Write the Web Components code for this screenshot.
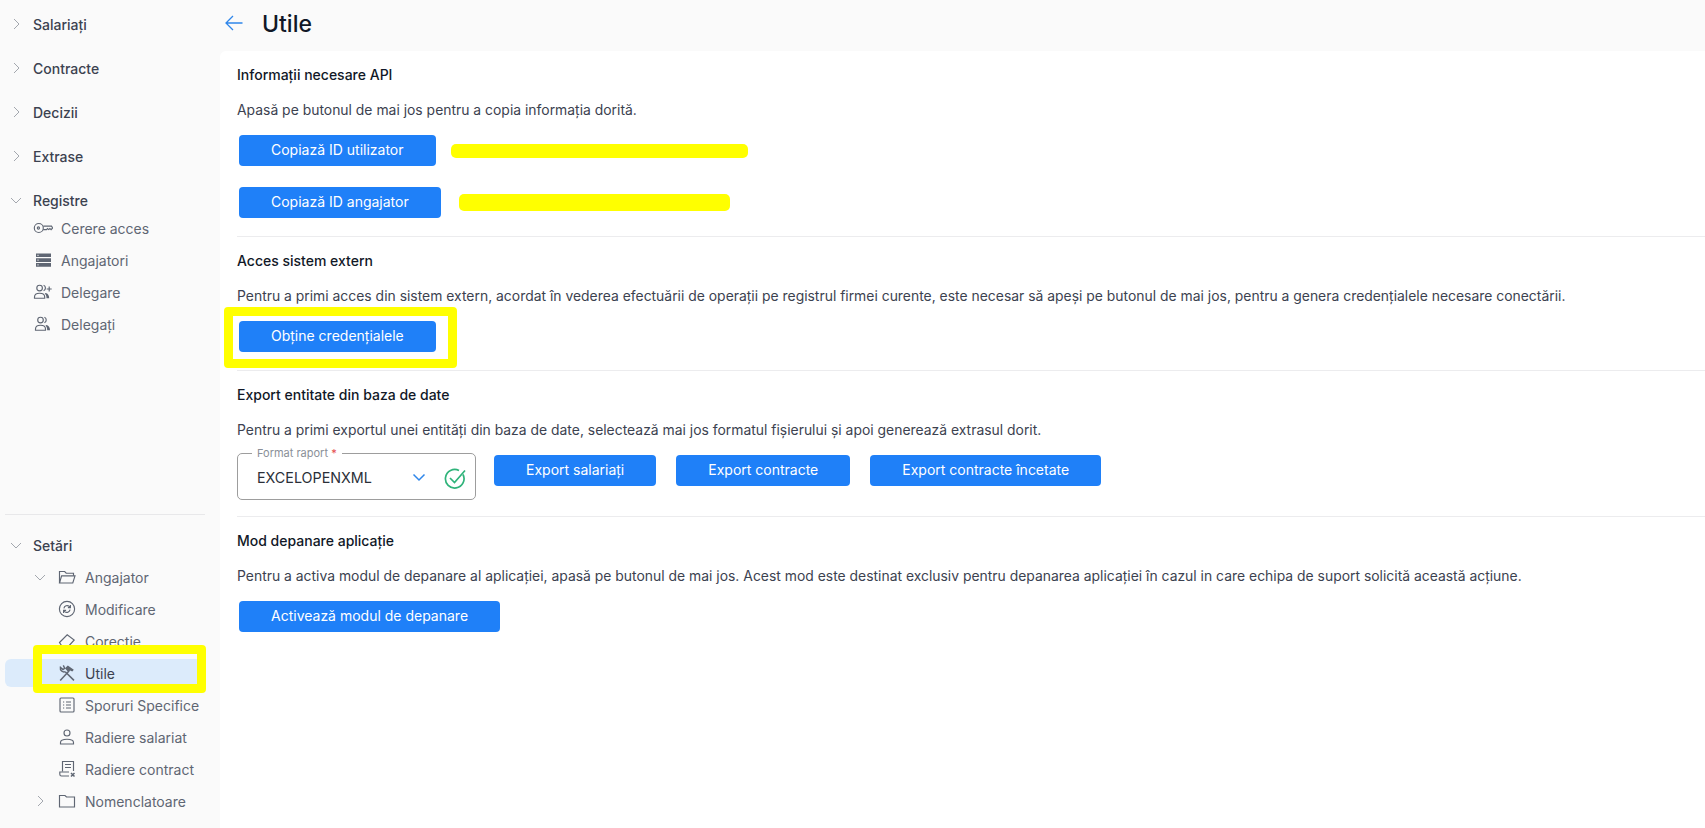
<!DOCTYPE html>
<html lang="ro">
<head>
<meta charset="utf-8">
<title>Utile</title>
<style>
  html, body { margin: 0; height: 100%; }
  body { font: 14px Inter, "Liberation Sans", sans-serif; background: #fafafa; overflow: hidden; }
</style>
</head>
<body>
<app-shell>
  <side-nav slot="nav">
    <nav-item top caret="closed">Salariați</nav-item>
    <nav-item top caret="closed">Contracte</nav-item>
    <nav-item top caret="closed">Decizii</nav-item>
    <nav-item top caret="closed">Extrase</nav-item>
    <nav-item top caret="open" style="height:25px;padding-top:1px">Registre</nav-item>
    <nav-item icon="key">Cerere acces</nav-item>
    <nav-item icon="server">Angajatori</nav-item>
    <nav-item icon="userplus">Delegare</nav-item>
    <nav-item icon="users">Delegați</nav-item>
    <nav-item slot="bottom" top caret="open" class="settings">Setări</nav-item>
    <nav-item slot="bottom" level="1" caret="open" icon="folderopen">Angajator</nav-item>
    <nav-item slot="bottom" level="1" icon="refresh">Modificare</nav-item>
    <nav-item slot="bottom" level="1" icon="eraser">Corecție</nav-item>
    <nav-item slot="bottom" level="1" icon="tools" selected marked>Utile</nav-item>
    <nav-item slot="bottom" level="1" icon="list">Sporuri Specifice</nav-item>
    <nav-item slot="bottom" level="1" icon="user">Radiere salariat</nav-item>
    <nav-item slot="bottom" level="1" icon="contract">Radiere contract</nav-item>
    <nav-item slot="bottom" level="1" caret="closed" icon="folder">Nomenclatoare</nav-item>
  </side-nav>

  <page-header slot="header">Utile</page-header>

  <page-section>
    <span slot="title">Informații necesare API</span>
    <span slot="text">Apasă pe butonul de mai jos pentru a copia informația dorită.</span>
    <action-row gap="15" style="margin-bottom:21px">
      <ui-button>Copiază ID utilizator</ui-button>
      <redact-bar width="297" height="14"></redact-bar>
    </action-row>
    <action-row gap="18">
      <ui-button>Copiază ID angajator</ui-button>
      <redact-bar width="271" height="17"></redact-bar>
    </action-row>
  </page-section>

  <page-section>
    <span slot="title">Acces sistem extern</span>
    <span slot="text">Pentru a primi acces din sistem extern, acordat în vederea efectuării de operații pe registrul firmei curente, este necesar să apeși pe butonul de mai jos, pentru a genera credențialele necesare conectării.</span>
    <action-row>
      <ui-button marked>Obține credențialele</ui-button>
    </action-row>
  </page-section>

  <page-section class="export">
    <span slot="title">Export entitate din baza de date</span>
    <span slot="text">Pentru a primi exportul unei entități din baza de date, selectează mai jos formatul fișierului și apoi generează extrasul dorit.</span>
    <action-row gap="20" class="flush">
      <report-select label="Format raport" value="EXCELOPENXML"></report-select>
      <ui-button>Export salariați</ui-button>
      <ui-button>Export contracte</ui-button>
      <ui-button>Export contracte încetate</ui-button>
    </action-row>
  </page-section>

  <page-section last>
    <span slot="title">Mod depanare aplicație</span>
    <span slot="text">Pentru a activa modul de depanare al aplicației, apasă pe butonul de mai jos. Acest mod este destinat exclusiv pentru depanarea aplicației în cazul in care echipa de suport solicită această acțiune.</span>
    <action-row>
      <ui-button>Activează modul de depanare</ui-button>
    </action-row>
  </page-section>
</app-shell>

<script>
  // icons, all on a 20x20 grid
  const ICONS = {
    key: '<circle cx="5.800" cy="10" r="4.500"/><circle cx="5.400" cy="10" r="1.100"/><path d="M10.200 8.100h8.300l1.200 1.900-1.600 1.600-1.200-1-1.200 1-1.200-1-1 1h-3.300"/>',
    server: '<g fill="currentColor" stroke="none"><path d="M3 3.500h15v3.600H3zM3 8.300h15v3.600H3zM3 13.100h15v3.600H3z"/></g><path d="M4.500 5.300h1M4.500 10.100h1M4.500 14.900h1" stroke="#fafafa"/>',
    userplus: '<circle cx="6.600" cy="6" r="2.800"/><path d="M1.500 16.200v-1.100c0-2.400 2.100-3.900 5.100-3.900s5.100 1.500 5.100 3.900v1.100z"/><path d="M10.600 3.300a2.900 2.900 0 0 1 0 5.400"/><path d="M12.500 11c2.400.5 3.700 2.300 3.700 5.200h-2.700c0-2-.5-3.500-1.700-4.400z" fill="currentColor" stroke="none"/><path d="M16.200 4.500v5M13.700 7h5"/>',
    users: '<circle cx="7.500" cy="6" r="2.800"/><path d="M2.500 16.200v-1.100c0-2.400 2.100-3.900 5-3.900s5 1.500 5 3.900v1.100z"/><path d="M11.400 3.300a2.900 2.900 0 0 1 0 5.400"/><path d="M13.200 11c2.500.5 3.800 2.300 3.800 5.200h-2.800c0-2-.5-3.500-1.700-4.400z" fill="currentColor" stroke="none"/>',
    folderopen: '<path d="M2.500 16V4.500h5.200l1.500 1.700h7.300v2.600"/><path d="M2.500 16h13.300l2.200-7.200H4.600z"/>',
    folder: '<path d="M2.500 16V4.500h5.500l1.500 1.500h8v10z"/>',
    refresh: '<circle cx="10" cy="10" r="7.600"/><path d="M6.900 9.300a3.300 3.300 0 0 1 5.400-1.900l.9 1M13.100 10.700a3.300 3.300 0 0 1-5.400 1.900l-.9-1"/><path d="M13.400 6v2.600h-2.500M6.600 14v-2.600h2.500"/>',
    eraser: '<path d="M2.500 11.500 10.200 3.800l7 5.200-7.200 8H6.200z"/>',
    tools: '<path d="M3.200 17.400 12 8.100" stroke-width="1.500"/><path d="M8 5.200 10.800 2.600l6 4.100-1.500 1.700-2.200-1-1.700 1.800z" fill="currentColor" stroke="none"/><path d="M17 17.400 8.200 8.700" stroke-width="1.500"/><path d="M8.200 8.700C5.600 9.600 2.800 7.500 3.400 4.400l2.600 2.100 1.700-1.300-1.400-2.800" stroke-width="1.400"/>',
    list: '<rect x="3" y="3" width="14" height="14" rx="1"/><path d="M6 7h1.200M9 7h5M6 10h1.200M9 10h5M6 13h1.200M9 13h5"/>',
    user: '<circle cx="10" cy="6" r="3"/><path d="M3.500 17v-1.600c0-2 2.200-3.200 6.500-3.200s6.500 1.200 6.500 3.200V17z"/>',
    contract: '<path d="M5.500 12.500V2.500h11v9.500M8 5.500h6M8 8.500h6"/><path d="M12 13H2.800v2.200c0 1 .7 1.800 1.700 1.800H12"/><path d="M14 14l3.500 3.500M17.500 14 14 17.500" stroke-width="1.500"/>'
  };

  class AppShell extends HTMLElement {
    constructor() {
      super();
      this.attachShadow({ mode: "open" }).innerHTML = `
        <style>
          :host { display: grid; grid-template-columns: 220px 1fr; height: 100vh; overflow: hidden; }
          main { display: flex; flex-direction: column; min-width: 0; }
          .panel { flex: 1; background: #fff; border-top-left-radius: 6px; padding: 14px 0 0 17px; }
        </style>
        <slot name="nav"></slot>
        <main>
          <slot name="header"></slot>
          <div class="panel"><slot></slot></div>
        </main>`;
    }
  }

  class SideNav extends HTMLElement {
    constructor() {
      super();
      this.attachShadow({ mode: "open" }).innerHTML = `
        <style>
          :host { display: flex; flex-direction: column; height: 100vh; box-sizing: border-box; padding: 11px 0; }
          .top { display: flex; flex-direction: column; }
          .bottom { margin-top: auto; display: flex; flex-direction: column; }
          hr { border: 0; height: 1px; background: #e8e8ea; margin: 0 15px 17px 5px; }
        </style>
        <div class="top"><slot></slot></div>
        <div class="bottom"><hr><slot name="bottom"></slot></div>`;
    }
  }

  class NavItem extends HTMLElement {
    constructor() {
      super();
      const caret = this.getAttribute("caret");
      const icon = this.getAttribute("icon");
      const chevron = caret === "open" ? "M1 4l5 5 5-5" : "M4 1l5 5-5 5";
      this.attachShadow({ mode: "open" }).innerHTML = `
        <style>
          :host { display: block; position: relative; height: 32px; box-sizing: border-box; padding: 2px 0; color: #5f6673; font-size: 14px; }
          :host([top]) { height: 26px; padding: 0; color: #3c4250; font-weight: 500; margin-bottom: 18px; }
          :host([top][caret="open"]) { margin-bottom: 0; }
          :host(.settings) { margin-bottom: 3px !important; }
          .row { display: flex; align-items: center; height: 100%; width: 198px; margin-left: 5px; padding-left: 5px; box-sizing: border-box; border-radius: 6px; white-space: nowrap; }
          :host([level="1"]) .row { padding-left: 29px; }
          :host([selected]) .row { background: #dcebfb; color: #3c4250; }
          .caret { width: 23px; flex: none; display: flex; }
          .caret svg { width: 12px; height: 12px; fill: none; stroke: #a3a7ae; stroke-width: 1; }
          .icon { width: 20px; height: 20px; flex: none; margin-right: 8px; fill: none; stroke: currentColor; stroke-width: 1.15; color: #5f6673; }
          .mark { position: absolute; left: 33px; right: 14px; top: -12px; bottom: -4px; border: 9px solid #ffff00; border-radius: 4px; z-index: 2; }
        </style>
        <div class="row">
          <span class="caret">${caret ? `<svg viewBox="0 0 12 12"><path d="${chevron}"/></svg>` : ""}</span>
          ${icon ? `<svg class="icon" viewBox="0 0 20 20">${ICONS[icon]}</svg>` : ""}
          <slot></slot>
        </div>
        ${this.hasAttribute("marked") ? '<div class="mark"></div>' : ""}`;
    }
  }

  class PageHeader extends HTMLElement {
    constructor() {
      super();
      this.attachShadow({ mode: "open" }).innerHTML = `
        <style>
          :host { display: flex; align-items: center; height: 51px; box-sizing: border-box; padding: 0 0 4px 5px; gap: 19px; color: #111827; font-size: 23px; font-weight: 500; }
          svg { width: 18px; height: 18px; fill: none; stroke: #2f86ea; stroke-width: 1.3; margin-bottom: 1px; }
        </style>
        <svg viewBox="0 0 18 18"><path d="M17.500 9H1M8 2 1 9l7 7"/></svg>
        <slot></slot>`;
    }
  }

  class PageSection extends HTMLElement {
    constructor() {
      super();
      this.attachShadow({ mode: "open" }).innerHTML = `
        <style>
          :host { display: block; border-bottom: 1px solid #ececee; padding-bottom: 18px; margin-bottom: 14px; }
          :host(.export) { padding-bottom: 16px; }
          :host([last]) { border-bottom: 0; }
          .title { color: #111827; font-weight: 500; line-height: 20px; white-space: nowrap; }
          .text { color: #3c4250; font-size: 13.92px; line-height: 20px; margin: 15px 0; white-space: nowrap; }
          :host(.export) .text { margin-bottom: 13px; }
        </style>
        <div class="title"><slot name="title"></slot></div>
        <div class="text"><slot name="text"></slot></div>
        <slot></slot>`;
    }
  }

  class ActionRow extends HTMLElement {
    constructor() {
      super();
      const gap = this.getAttribute("gap") || 0;
      this.attachShadow({ mode: "open" }).innerHTML = `
        <style>
          :host { display: flex; align-items: center; gap: ${gap}px; padding-left: 2px; }
          :host(.flush) { padding-left: 0; align-items: flex-start; }
        </style>
        <slot></slot>`;
    }
  }

  class UiButton extends HTMLElement {
    constructor() {
      super();
      this.attachShadow({ mode: "open" }).innerHTML = `
        <style>
          :host { display: inline-flex; position: relative; }
          :host-context(.flush) { margin-top: 2px; }
          button { height: 31px; padding: 0 32px 2px; border: 0; border-radius: 4px; background: #1f80f8; color: #fff; font: 400 14px Inter, "Liberation Sans", sans-serif; white-space: nowrap; }
          .mark { position: absolute; inset: -14px -21px -16px -15px; border: 9px solid #ffff00; border-radius: 4px; }
        </style>
        <button type="button"><slot></slot></button>
        ${this.hasAttribute("marked") ? '<div class="mark"></div>' : ""}`;
    }
  }

  class RedactBar extends HTMLElement {
    constructor() {
      super();
      this.attachShadow({ mode: "open" }).innerHTML = `
        <style>
          :host { display: block; flex: none; width: ${this.getAttribute("width")}px; height: ${this.getAttribute("height")}px; background: #ffff00; border-radius: 5px; }
        </style>`;
    }
  }

  class ReportSelect extends HTMLElement {
    constructor() {
      super();
      this.attachShadow({ mode: "open" }).innerHTML = `
        <style>
          :host { display: flex; align-items: center; position: relative; width: 239px; height: 47px; box-sizing: border-box; border: 1px solid #9d9d9d; border-radius: 5px; padding: 2px 9px 0 19px; color: #2b2f38; flex: none; margin-right: -2px; }
          .label { position: absolute; left: 14px; top: -7px; padding: 0 5px; background: #fff; color: #8a8f98; font-size: 11px; line-height: 13px; white-space: nowrap; }
          .label b { color: #e5484d; font-weight: 400; }
          .value { flex: 1; white-space: nowrap; font-size: 14.3px; }
          .chev { width: 14px; height: 9px; fill: none; stroke: #2f86ea; stroke-width: 1.5; margin-right: 18px; }
          .ok { width: 22px; height: 24px; fill: none; stroke: #2fb37a; stroke-width: 1.7; }
        </style>
        <span class="label">${this.getAttribute("label")} <b>*</b></span>
        <span class="value">${this.getAttribute("value")}</span>
        <svg class="chev" viewBox="0 0 14 9"><path d="M1.500 1.500 7 7l5.500-5.500"/></svg>
        <svg class="ok" viewBox="0 0 22 24"><path d="M19 8.500a9.300 9.300 0 1 1-4-4"/><path d="M6 12l4.500 4.500L21 4.500"/></svg>`;
    }
  }

  customElements.define("app-shell", AppShell);
  customElements.define("side-nav", SideNav);
  customElements.define("nav-item", NavItem);
  customElements.define("page-header", PageHeader);
  customElements.define("page-section", PageSection);
  customElements.define("action-row", ActionRow);
  customElements.define("ui-button", UiButton);
  customElements.define("redact-bar", RedactBar);
  customElements.define("report-select", ReportSelect);
</script>
</body>
</html>
